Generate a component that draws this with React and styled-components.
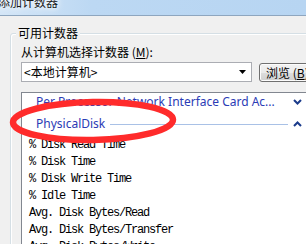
import React from 'react'
import styled, { createGlobalStyle } from 'styled-components'

const GlobalStyle = createGlobalStyle`
  html, body {
    margin: 0;
    padding: 0;
  }
  body {
    width: 306px;
    height: 244px;
    overflow: hidden;
    background: #f0f0f0;
    font-family: "Noto Sans", "Noto Sans CJK SC", sans-serif;
  }
`

const cjk = `"Noto Sans CJK SC", "Noto Sans", sans-serif`

const Window = styled.div`
  position: relative;
  width: 306px;
  height: 244px;
  overflow: hidden;
  background: #f0f0f0;
`

const TitleBar = styled.div`
  height: 15px;
  overflow: hidden;
  background: linear-gradient(90deg, #d4e6f7 0%, #bcd8f3 30%, #b7d5f2 100%);
  border-bottom: 1px solid #8ea6bf;
`

const TitleText = styled.div`
  margin: -5px 0 0 -2px;
  font-family: ${cjk};
  font-size: 12px;
  line-height: 14px;
  color: #1a1a1a;
  text-shadow: 0 0 5px #fff, 0 0 8px #fff;
`

const Content = styled.div`
  padding: 17px 0 0 10px;
`

const GroupBox = styled.div`
  width: 320px;
  height: 240px;
  border: 1px solid #d5dfe5;
  border-radius: 3px;
  box-shadow: inset 1px 1px 0 #fff;
  padding-left: 10px;
`

const Legend = styled.div`
  width: max-content;
  margin: -9px 0 0 -5px;
  padding: 0 2px;
  background: #f0f0f0;
  font-family: ${cjk};
  font-size: 12px;
  line-height: 16px;
  color: #000;
`

const Label = styled.div`
  margin-top: 3px;
  font-family: ${cjk};
  font-size: 12px;
  line-height: 16px;
  color: #000;

  u {
    text-decoration: underline;
  }
`

const ControlRow = styled.div`
  display: flex;
  align-items: flex-start;
  gap: 7px;
  margin-top: 2px;
`

const ComboBox = styled.div`
  box-sizing: border-box;
  width: 231px;
  height: 20px;
  display: flex;
  align-items: center;
  justify-content: space-between;
  padding: 0 5px 0 2px;
  background: #fff;
  border: 1px solid #abadb3;
  font-family: ${cjk};
  font-size: 12px;
  line-height: 16px;
  color: #000;
`

const Button = styled.div`
  box-sizing: border-box;
  flex: none;
  width: 70px;
  height: 19px;
  margin-top: 1px;
  padding-left: 6px;
  border: 1px solid #707070;
  border-radius: 3px;
  background: linear-gradient(#f2f2f2 0%, #ebebeb 50%, #dddddd 51%, #cfcfcf 100%);
  box-shadow: inset 0 0 0 1px #fcfcfc;
  font-family: ${cjk};
  font-size: 12px;
  line-height: 17px;
  white-space: nowrap;
  color: #000;
`

const ListBox = styled.div`
  width: 300px;
  height: 200px;
  margin-top: 10px;
  background: #fff;
  border: 1px solid #828790;
`

const HeaderRow = styled.div`
  width: 284px;
  height: 22px;
  display: flex;
  align-items: flex-start;
  padding-left: 14px;
  box-sizing: border-box;
`

const HeaderText = styled.div`
  flex: ${({ $fill }) => ($fill ? '1 1 auto' : 'none')};
  min-width: 0;
  white-space: nowrap;
  font-family: "Noto Sans", sans-serif;
  font-size: 12px;
  line-height: 18px;
  color: #2b3bb5;
`

const HeaderLine = styled.div`
  flex: 1;
  height: 1px;
  margin: 9px 0 0 5px;
  background: #a9c1e6;
`

const Chevron = styled.div`
  flex: none;
  width: 18px;
  height: 18px;
  display: flex;
  align-items: center;
  justify-content: center;
`

const Item = styled.div`
  padding-left: 7px;
  font-family: "Liberation Mono", monospace;
  font-size: 12px;
  letter-spacing: -1.2px;
  line-height: 17px;
  white-space: pre;
  color: #000;
`

const Overlay = styled.svg`
  position: absolute;
  left: 0;
  top: 0;
  pointer-events: none;
`

const ChevronIcon = ({ up }) => (
  <svg width="9" height="6" viewBox="0 0 9 6">
    <polyline
      points={up ? '1,5 4.5,1.5 8,5' : '1,1 4.5,4.5 8,1'}
      fill="none"
      stroke="#1b3b8b"
      strokeWidth="2"
    />
  </svg>
)

const DropArrow = () => (
  <svg width="7" height="4" viewBox="0 0 7 4">
    <polygon points="0,0 7,0 3.5,4" fill="#000" />
  </svg>
)

const items = [
  '% Disk Read Time',
  '% Disk Time',
  '% Disk Write Time',
  '% Idle Time',
  'Avg. Disk Bytes/Read',
  'Avg. Disk Bytes/Transfer',
  'Avg. Disk Bytes/Write'
]

export default function App () {
  return (
    <Window>
      <GlobalStyle />
      <TitleBar>
        <TitleText>添加计数器</TitleText>
      </TitleBar>
      <Content>
        <GroupBox>
          <Legend>可用计数器</Legend>
          <Label>从计算机选择计数器 (<u>M</u>):</Label>
          <ControlRow>
            <ComboBox>
              <span>&lt;本地计算机&gt;</span>
              <DropArrow />
            </ComboBox>
            <Button>浏览 (<u>B</u>)</Button>
          </ControlRow>
          <ListBox>
            <HeaderRow>
              <HeaderText $fill>Per Processor Network Interface Card Ac...</HeaderText>
              <Chevron><ChevronIcon /></Chevron>
            </HeaderRow>
            <HeaderRow>
              <HeaderText>PhysicalDisk</HeaderText>
              <HeaderLine />
              <Chevron><ChevronIcon up /></Chevron>
            </HeaderRow>
            {items.map(i => <Item key={i}>{i}</Item>)}
          </ListBox>
        </GroupBox>
      </Content>
      <Overlay width="306" height="244" viewBox="0 0 306 244">
        <ellipse
          cx="93"
          cy="121"
          rx="80"
          ry="19"
          transform="rotate(-1 93 121)"
          fill="none"
          stroke="#ff2b2b"
          strokeWidth="6.5"
        />
      </Overlay>
    </Window>
  )
}
